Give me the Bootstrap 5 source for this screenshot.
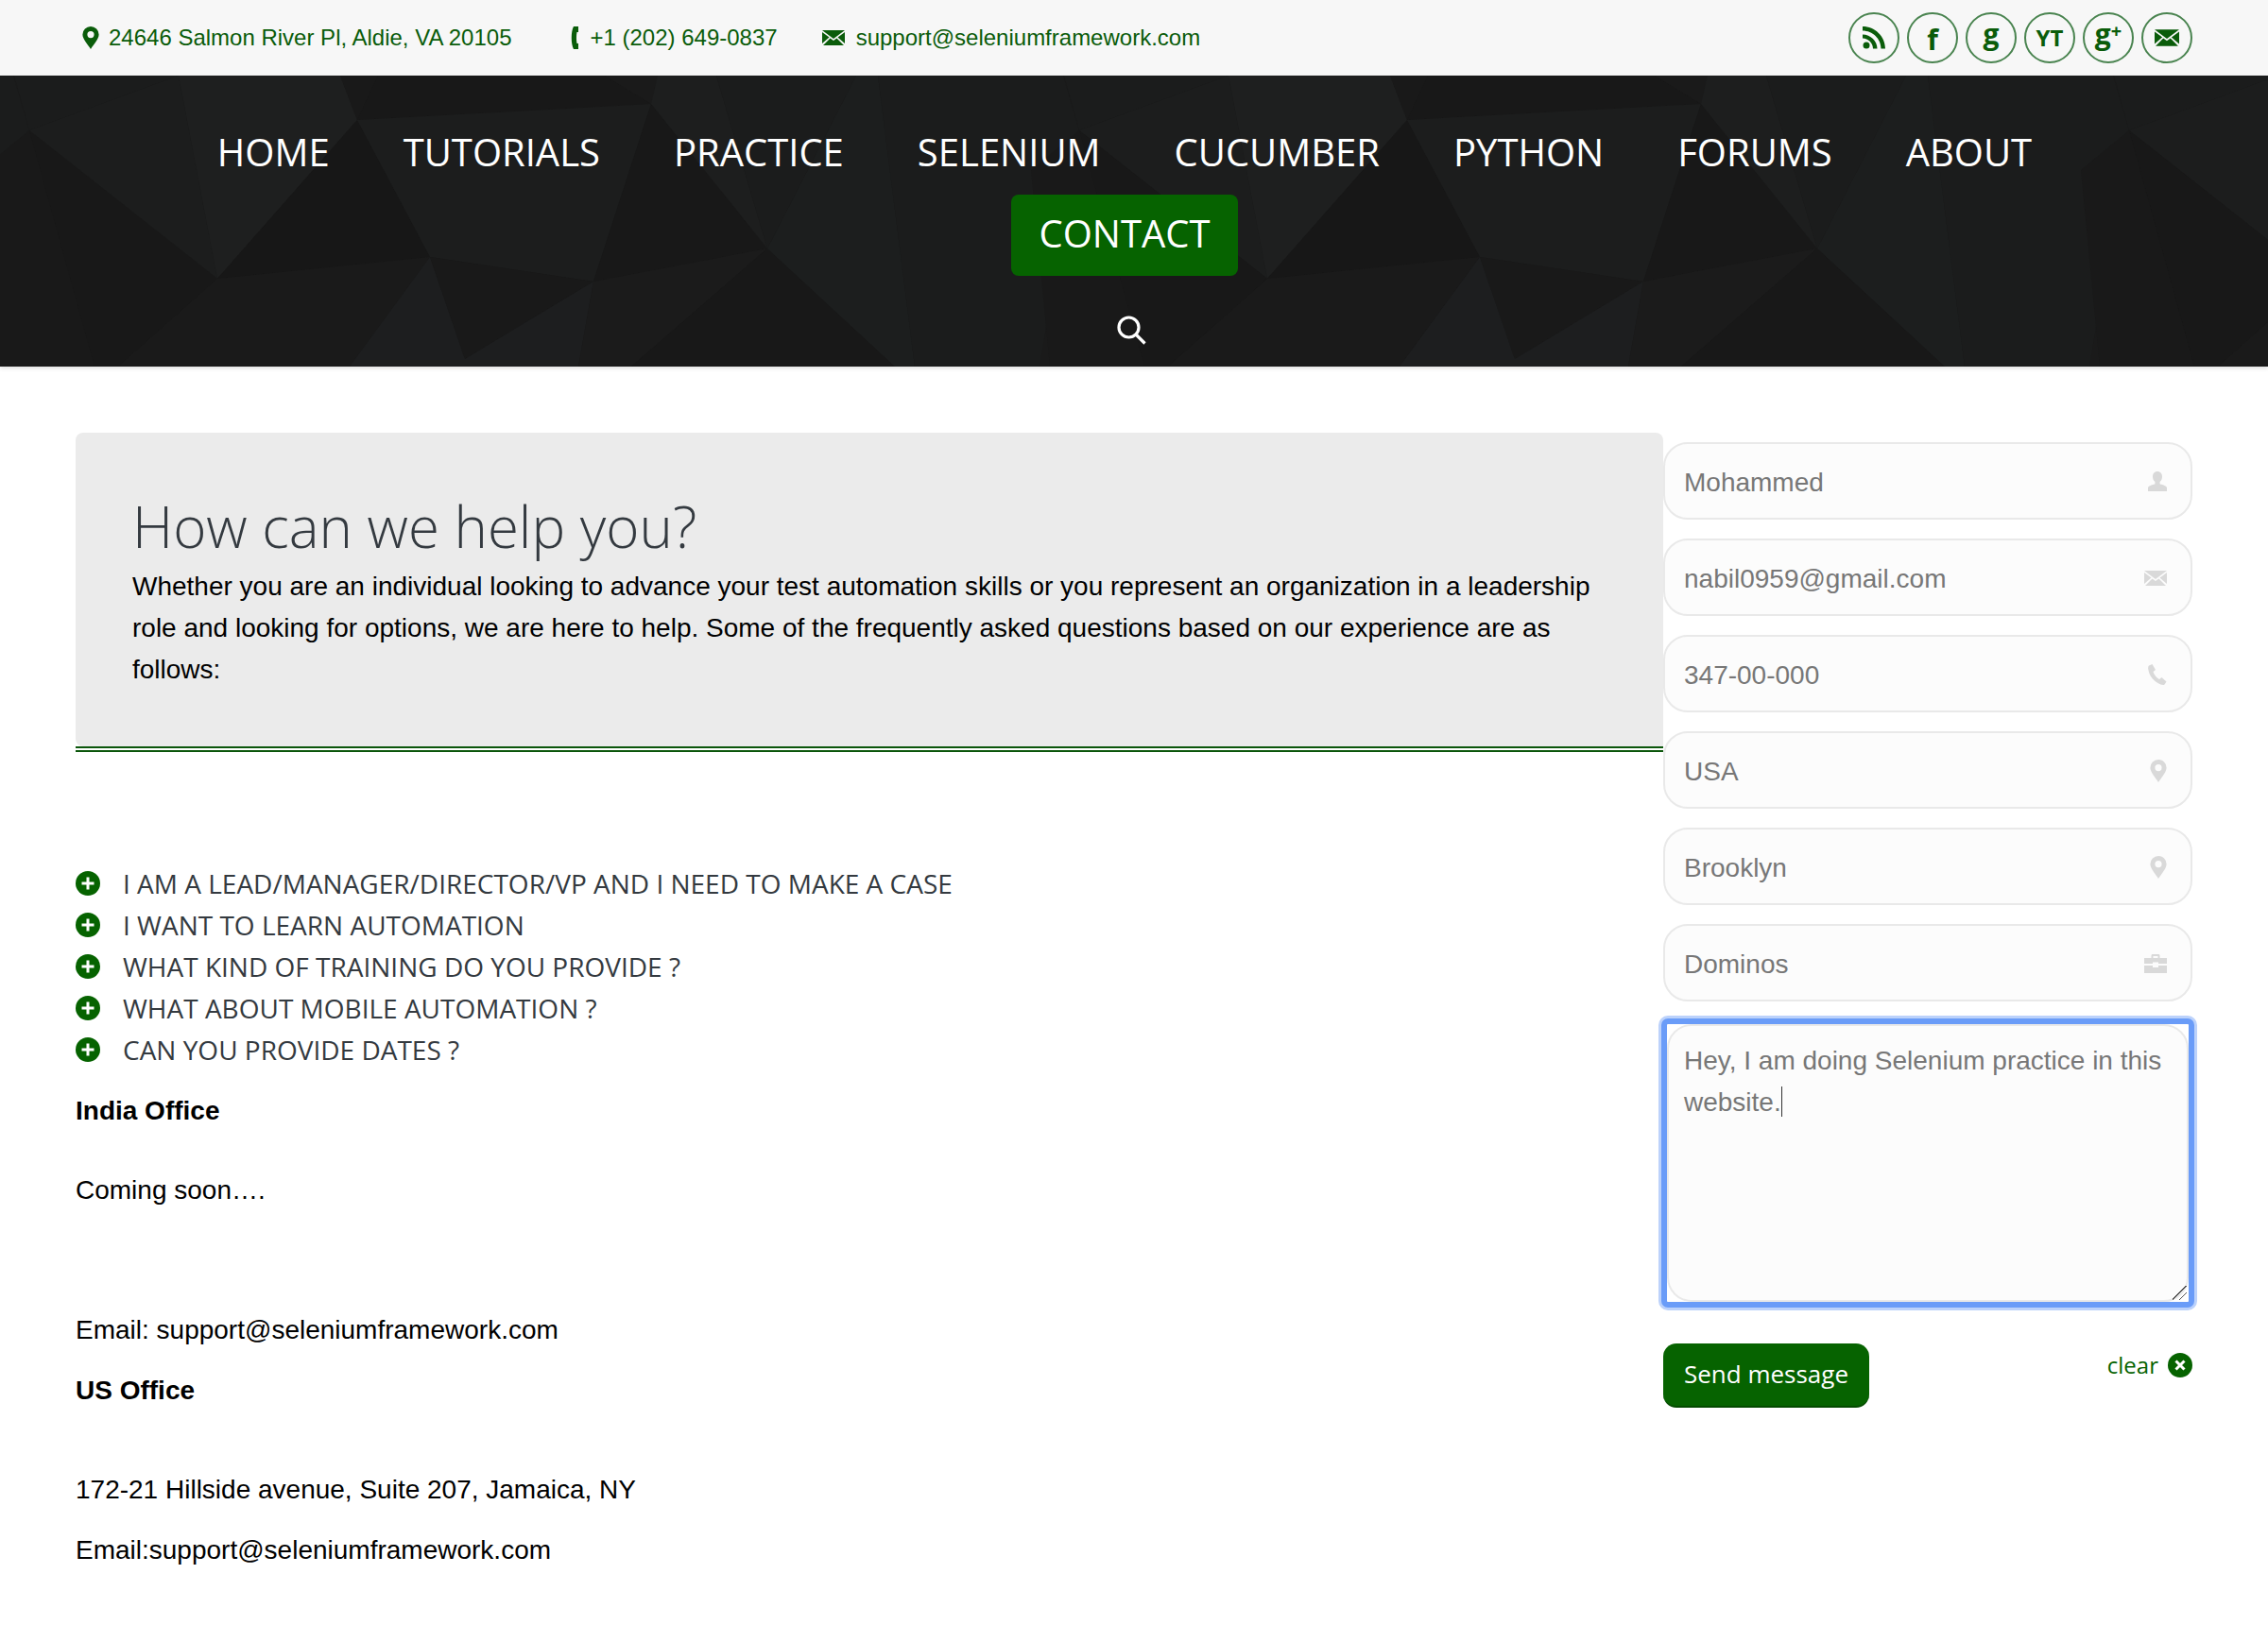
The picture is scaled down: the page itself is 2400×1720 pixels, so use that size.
<!DOCTYPE html>
<html lang="en">
<head>
    <meta charset="UTF-8">
    <meta name="viewport" content="width=device-width, initial-scale=1.0">
    <title>Contact</title>
    <link href="https://cdn.jsdelivr.net/npm/bootstrap@5.3.1/dist/css/bootstrap.min.css" rel="stylesheet">
    <style>
        body {
            background-color: #fff;
            font-family: "Liberation Sans", Arial, sans-serif;
            font-size: 28px;
            line-height: 44px;
            color: #000;
        }

        /* top strip */
        .top-strip {
            height: 80px;
            background-color: #f7f7f7;
            padding: 0 80px 0 87px;
            color: #0a5c0a;
            font-size: 24px;
        }
        .top-info { margin-right: 47px; }
        .top-info:first-child { margin-right: 62px; }
        .top-info svg { margin-right: 10px; fill: #0a5c0a; flex: none; }
        .top-info .icon-phone { margin-right: 13px; }
        .top-info .icon-mail { margin-right: 12px; }
        .social-ring {
            width: 54px;
            height: 54px;
            border: 2px solid #4a8450;
            border-radius: 50%;
            margin-left: 8px;
            color: #0a5c0a;
            font-family: "Open Sans", sans-serif;
            font-weight: 700;
            line-height: 1;
        }
        .social-ring svg { fill: #0a5c0a; }
        .ring-big { font-size: 30px; }
        .ring-f { padding-top: 3px; }
        .ring-g { padding-bottom: 8px; }
        .ring-small { font-size: 24px; }
        .ring-plus { font-size: 20px; margin-top: -6px; }

        /* dark header */
        .dark-head {
            height: 308px;
            background-color: #1a1a1a;
            padding-top: 40px;
            box-shadow: 0 2px 4px rgba(0, 0, 0, 0.12);
            overflow: hidden;
        }
        .poly-bg {
            position: absolute;
            top: 0;
            left: 0;
        }
        .main-menu {
            width: 2200px;
            margin: 0 0 0 90px;
            position: relative;
        }
        .main-menu .nav-item { margin: 0 9px; }
        .main-menu .nav-link {
            font-family: "Open Sans", sans-serif;
            font-size: 40px;
            line-height: 82px;
            height: 86px;
            padding: 0 30px;
            color: #fff;
            border-radius: 8px;
        }
        .main-menu .nav-link.active-green { background-color: #066300; }
        .search-holder {
            position: relative;
            padding: 42px 6px 0 0;
        }

        /* content */
        .page-wrap { padding: 70px 80px 0; }
        .help-box {
            background-color: #ebebeb;
            border-radius: 8px 8px 0 8px;
            height: 332px;
            padding: 63px 60px 0;
        }
        .help-box h2 {
            font-family: "Open Sans", sans-serif;
            font-weight: 300;
            font-size: 60px;
            line-height: 72px;
            color: #343a40;
            margin-bottom: 6px;
        }
        .help-box p { margin: 0; }
        .dbl-rule { border-bottom: 6px double #0b560b; }

        .faq-list { margin: 117px 0 0; padding: 0; list-style: none; }
        .faq-list li {
            font-family: "Open Sans", sans-serif;
            font-size: 28px;
            color: #343a40;
            height: 44px;
        }
        .faq-list svg { margin-right: 24px; flex: none; }

        .office-block { margin-top: 21px; }
        .office-block p { margin: 0 0 20px; }
        .office-block .gap-soon { margin-bottom: 40px; }
        .office-block .gap-mail { margin-bottom: 104px; }
        .office-block .gap-us { margin-bottom: 61px; }

        /* form */
        .field-wrap { position: relative; margin: 10px 0 20px; }
        .field-wrap + .field-wrap { margin-top: 0; }
        .field-wrap .form-control {
            height: 82px;
            border: 2px solid #e9e9e9;
            border-radius: 26px;
            background-color: #fcfcfc;
            color: #777;
            font-size: 28px;
            padding: 3px 60px 0 20px;
            box-shadow: none;
        }
        .field-icon {
            position: absolute;
            top: 51%;
            right: 27px;
            transform: translateY(-50%);
            fill: #d9d9d9;
        }
        .msg-ring {
            position: relative;
            margin: -2px -2px 0;
            border: 6px solid #6a9cf8;
            border-radius: 7px;
            box-shadow: 0 0 0 3px #bcd2fb;
            height: 306px;
            background: #fff;
        }
        .msg-ring textarea.form-control {
            display: block;
            height: 294px;
            padding: 15px 16px;
            font-size: 28px;
            line-height: 44px;
            color: #777;
            background-color: #fcfcfc;
            border: 2px solid #e9e9e9;
            border-radius: 26px;
            box-shadow: none;
        }
        .msg-ring textarea.form-control::-webkit-resizer {
            background: linear-gradient(135deg, transparent 44%, #555 44%, #555 50%, transparent 50%, transparent 70%, #555 70%, #555 76%, transparent 76%);
        }
        .fake-caret {
            position: absolute;
            left: 121px;
            top: 66px;
            width: 1px;
            height: 32px;
            background-color: #333;
        }
        .form-foot { margin-top: 38px; }
        .btn-send {
            background-color: #066300;
            border: 0;
            border-bottom: 2px solid #044a00;
            color: #fff;
            font-family: "Open Sans", sans-serif;
            font-size: 26px;
            line-height: 40px;
            height: 68px;
            width: 218px;
            padding: 0 0 2px;
            border-radius: 14px;
        }
        .clear-link {
            color: #066300;
            font-family: "Open Sans", sans-serif;
            font-size: 24px;
            text-decoration: none;
            line-height: 46px;
        }
        .clear-link svg { margin-left: 10px; }
    </style>
</head>
<body>

    <!-- top strip -->
    <div class="top-strip d-flex align-items-center justify-content-between">
        <div class="d-flex align-items-center">
            <div class="top-info d-flex align-items-center">
                <svg width="18" height="24" viewBox="0 0 18 24"><path fill-rule="evenodd" d="M9 0a8.6 8.6 0 0 1 8.6 8.6c0 5-5.6 10.6-8.6 15.4C6 19.200.4 13.600.4 8.600A8.600 8.600 0 0 1 9 0zm0 5a3.600 3.600 0 1 0 0 7.200A3.600 3.600 0 0 0 9 5z"/></svg>
                <span>24646 Salmon River Pl, Aldie, VA 20105</span>
            </div>
            <div class="top-info d-flex align-items-center">
                <svg class="icon-phone" width="8" height="24" viewBox="0 0 8 24"><path d="M3 0h5v6H6.500C5.800 9 5.800 15 6.500 18H8v6H3C0 19 0 5 3 0z"/></svg>
                <span>+1 (202) 649-0837</span>
            </div>
            <div class="top-info d-flex align-items-center">
                <svg class="icon-mail" width="24" height="16" viewBox="0 0 24 16"><path d="M0 0l12 9L24 0zM0 2v12l7.500-6.500zM24 2v12l-7.500-6.500zM8.500 8.500L1 16h22l-7.500-7.500L12 11z"/></svg>
                <span>support@seleniumframework.com</span>
            </div>
        </div>
        <div class="d-flex">
            <a class="social-ring d-flex align-items-center justify-content-center text-decoration-none">
                <svg width="24" height="24" viewBox="0 0 24 24"><circle cx="4" cy="20" r="3.500"/><path d="M0 8.500c8.500 0 15.500 7 15.500 15h-4.500c0-6-5-11-11-11zM0 0c13 0 24 10.500 24 23.500h-4.500C19.500 13 10.500 4.500 0 4.500z"/></svg>
            </a>
            <a class="social-ring ring-big ring-f d-flex align-items-center justify-content-center text-decoration-none">f</a>
            <a class="social-ring ring-big ring-g d-flex align-items-center justify-content-center text-decoration-none">g</a>
            <a class="social-ring ring-small d-flex align-items-center justify-content-center text-decoration-none">YT</a>
            <a class="social-ring ring-big ring-g d-flex align-items-center justify-content-center text-decoration-none">g<span class="ring-plus">+</span></a>
            <a class="social-ring d-flex align-items-center justify-content-center text-decoration-none">
                <svg width="26" height="18" viewBox="0 0 24 16"><path d="M0 0l12 9L24 0zM0 2v12l7.500-6.500zM24 2v12l-7.500-6.500zM8.500 8.500L1 16h22l-7.500-7.500L12 11z"/></svg>
            </a>
        </div>
    </div>

    <!-- dark header with the low-poly backdrop -->
    <header class="dark-head position-relative">
        <svg class="poly-bg" width="2400" height="308" viewBox="0 0 2400 308">
            <defs>
                <g id="polyTile">
                    <polygon fill="#1b1c1c" points="15,0 189,0 31,58"/>
                    <polygon fill="#1c1d1d" points="31,58 189,0 230,215"/>
                    <polygon fill="#1e1f1f" points="189,0 360,0 378,47 230,215"/>
                    <polygon fill="#191919" points="360,0 400,0 378,47"/>
                    <polygon fill="#181818" points="31,58 230,215 125,308 100,308"/>
                    <polygon fill="#191919" points="31,58 100,308 0,308 -20,100"/>
                    <polygon fill="#171717" points="378,47 455,192 230,215"/>
                    <polygon fill="#181818" points="400,0 640,0 689,30 378,47"/>
                    <polygon fill="#1c1d1d" points="378,47 689,30 628,218 455,192"/>
                    <polygon fill="#1a1a1a" points="640,0 700,0 689,30"/>
                    <polygon fill="#181818" points="689,30 812,183 628,218"/>
                    <polygon fill="#1a1a1a" points="230,215 455,192 370,308 125,308"/>
                    <polygon fill="#1d1e1f" points="455,192 492,300 492,308 370,308"/>
                    <polygon fill="#191919" points="455,192 628,218 492,300"/>
                    <polygon fill="#1d1e1f" points="628,218 612,308 492,308 492,300"/>
                    <polygon fill="#1b1b1b" points="628,218 812,183 668,308 612,308"/>
                    <polygon fill="#1d1e1e" points="689,30 696,0 758,0 812,183"/>
                    <polygon fill="#181818" points="812,183 947,308 668,308"/>
                    <polygon fill="#1c1e1e" points="812,183 906,0 929,0 968,308 947,308"/>
                    <polygon fill="#1b1c1c" points="758,0 906,0 812,183"/>
                    <polygon fill="#1b1c1c" points="929,0 1125,0 1142,58 1100,308 968,308"/>
                </g>
            </defs>
            <use href="#polyTile" x="-1111"/>
            <use href="#polyTile" x="0"/>
            <use href="#polyTile" x="1111"/>
            <use href="#polyTile" x="2222"/>
        </svg>

        <ul class="nav main-menu justify-content-center">
            <li class="nav-item"><a class="nav-link" href="#">HOME</a></li>
            <li class="nav-item"><a class="nav-link" href="#">TUTORIALS</a></li>
            <li class="nav-item"><a class="nav-link" href="#">PRACTICE</a></li>
            <li class="nav-item"><a class="nav-link" href="#">SELENIUM</a></li>
            <li class="nav-item"><a class="nav-link" href="#">CUCUMBER</a></li>
            <li class="nav-item"><a class="nav-link" href="#">PYTHON</a></li>
            <li class="nav-item"><a class="nav-link" href="#">FORUMS</a></li>
            <li class="nav-item"><a class="nav-link" href="#">ABOUT</a></li>
            <li class="nav-item"><a class="nav-link active-green" href="#">CONTACT</a></li>
        </ul>
        <div class="search-holder d-flex justify-content-center">
            <svg width="31" height="31" viewBox="0 0 31 31" fill="none" stroke="#fff" stroke-width="3.200"><circle cx="12.500" cy="12.500" r="10.500"/><path d="M20 20l9.500 9.500"/></svg>
        </div>
    </header>

    <div class="page-wrap">
        <div class="row g-0">
            <div class="col-9">
                <div class="help-box">
                    <h2>How can we help you?</h2>
                    <p>Whether you are an individual looking to advance your test automation skills or you represent an organization in a leadership role and looking for options, we are here to help. Some of the frequently asked questions based on our experience are as follows:</p>
                </div>
                <div class="dbl-rule"></div>

                <ul class="faq-list">
                    <li class="d-flex align-items-center"><svg width="26" height="26" viewBox="0 0 26 26"><circle cx="13" cy="13" r="13" fill="#066300"/><path d="M13 6.500v13M6.500 13h13" stroke="#fff" stroke-width="3"/></svg>I AM A LEAD/MANAGER/DIRECTOR/VP AND I NEED TO MAKE A CASE</li>
                    <li class="d-flex align-items-center"><svg width="26" height="26" viewBox="0 0 26 26"><circle cx="13" cy="13" r="13" fill="#066300"/><path d="M13 6.500v13M6.500 13h13" stroke="#fff" stroke-width="3"/></svg>I WANT TO LEARN AUTOMATION</li>
                    <li class="d-flex align-items-center"><svg width="26" height="26" viewBox="0 0 26 26"><circle cx="13" cy="13" r="13" fill="#066300"/><path d="M13 6.500v13M6.500 13h13" stroke="#fff" stroke-width="3"/></svg>WHAT KIND OF TRAINING DO YOU PROVIDE ?</li>
                    <li class="d-flex align-items-center"><svg width="26" height="26" viewBox="0 0 26 26"><circle cx="13" cy="13" r="13" fill="#066300"/><path d="M13 6.500v13M6.500 13h13" stroke="#fff" stroke-width="3"/></svg>WHAT ABOUT MOBILE AUTOMATION ?</li>
                    <li class="d-flex align-items-center"><svg width="26" height="26" viewBox="0 0 26 26"><circle cx="13" cy="13" r="13" fill="#066300"/><path d="M13 6.500v13M6.500 13h13" stroke="#fff" stroke-width="3"/></svg>CAN YOU PROVIDE DATES ?</li>
                </ul>

                <div class="office-block">
                    <p class="gap-soon"><strong>India Office</strong></p>
                    <p class="gap-mail">Coming soon….</p>
                    <p>Email: support@seleniumframework.com</p>
                    <p class="gap-us"><strong>US Office</strong></p>
                    <p>172-21 Hillside avenue, Suite 207, Jamaica, NY</p>
                    <p>Email:support@seleniumframework.com</p>
                </div>
            </div>

            <div class="col-3">
                <form>
                    <div class="field-wrap">
                        <input type="text" class="form-control" value="Mohammed">
                        <svg class="field-icon" width="20" height="22" viewBox="0 0 20 22"><path d="M10 0c3.200 0 5 2.400 5 5.400 0 2.400-1 4.400-2.400 5.600v2.200c3 1.200 7.400 2 7.400 4.300V21H0v-3.500c0-2.300 4.400-3.100 7.400-4.300V11C6 9.800 5 7.800 5 5.400 5 2.400 6.800 0 10 0z"/></svg>
                    </div>
                    <div class="field-wrap">
                        <input type="email" class="form-control" value="nabil0959@gmail.com">
                        <svg class="field-icon" width="24" height="16" viewBox="0 0 24 16"><path d="M0 0l12 9L24 0zM0 2v12l7.500-6.500zM24 2v12l-7.500-6.500zM8.500 8.500L1 16h22l-7.500-7.500L12 11z"/></svg>
                    </div>
                    <div class="field-wrap">
                        <input type="text" class="form-control" value="347-00-000">
                        <svg class="field-icon" width="20" height="22" viewBox="0 0 20 22"><path d="M1 1.500L4.500 0 8 6 5.500 8c.8 3 3.500 6.500 6.500 8l2.500-2 5 4.500-2 3c-.8.800-2.500.500-4 0C6.500 19 1 12 .2 5 0 3.500.200 2.200 1 1.500z"/></svg>
                    </div>
                    <div class="field-wrap">
                        <input type="text" class="form-control" value="USA">
                        <svg class="field-icon" width="18" height="24" viewBox="0 0 18 24"><path fill-rule="evenodd" d="M9 0a8.600 8.600 0 0 1 8.600 8.600c0 5-5.600 10.600-8.600 15.400C6 19.200.4 13.600.4 8.600A8.600 8.600 0 0 1 9 0zm0 5a3.600 3.600 0 1 0 0 7.200A3.600 3.600 0 0 0 9 5z"/></svg>
                    </div>
                    <div class="field-wrap">
                        <input type="text" class="form-control" value="Brooklyn">
                        <svg class="field-icon" width="18" height="24" viewBox="0 0 18 24"><path fill-rule="evenodd" d="M9 0a8.600 8.600 0 0 1 8.600 8.600c0 5-5.600 10.600-8.600 15.400C6 19.200.4 13.600.4 8.600A8.600 8.600 0 0 1 9 0zm0 5a3.600 3.600 0 1 0 0 7.200A3.600 3.600 0 0 0 9 5z"/></svg>
                    </div>
                    <div class="field-wrap">
                        <input type="text" class="form-control" value="Dominos">
                        <svg class="field-icon" width="24" height="20" viewBox="0 0 24 20"><path fill-rule="evenodd" d="M7.500 4V1.500C7.500.6 8 0 9 0h6c1 0 1.500.6 1.500 1.500V4H24v6H15V8.500H9V10H0V4zM9.500 4h5V2h-5zM0 12h9v2h6v-2h9v8H0z"/></svg>
                    </div>
                    <div class="msg-ring">
                        <textarea class="form-control">Hey, I am doing Selenium practice in this website.</textarea>
                        <span class="fake-caret"></span>
                    </div>
                    <div class="form-foot d-flex justify-content-between align-items-start">
                        <button type="button" class="btn btn-send">Send message</button>
                        <a class="clear-link d-flex align-items-center" href="#">clear<svg width="26" height="26" viewBox="0 0 26 26"><circle cx="13" cy="13" r="13" fill="#066300"/><path d="M8.500 8.500l9 9M17.500 8.500l-9 9" stroke="#fff" stroke-width="3"/></svg></a>
                    </div>
                </form>
            </div>
        </div>
    </div>

    <script src="https://cdn.jsdelivr.net/npm/bootstrap@5.3.1/dist/js/bootstrap.bundle.min.js"></script>
</body>
</html>
